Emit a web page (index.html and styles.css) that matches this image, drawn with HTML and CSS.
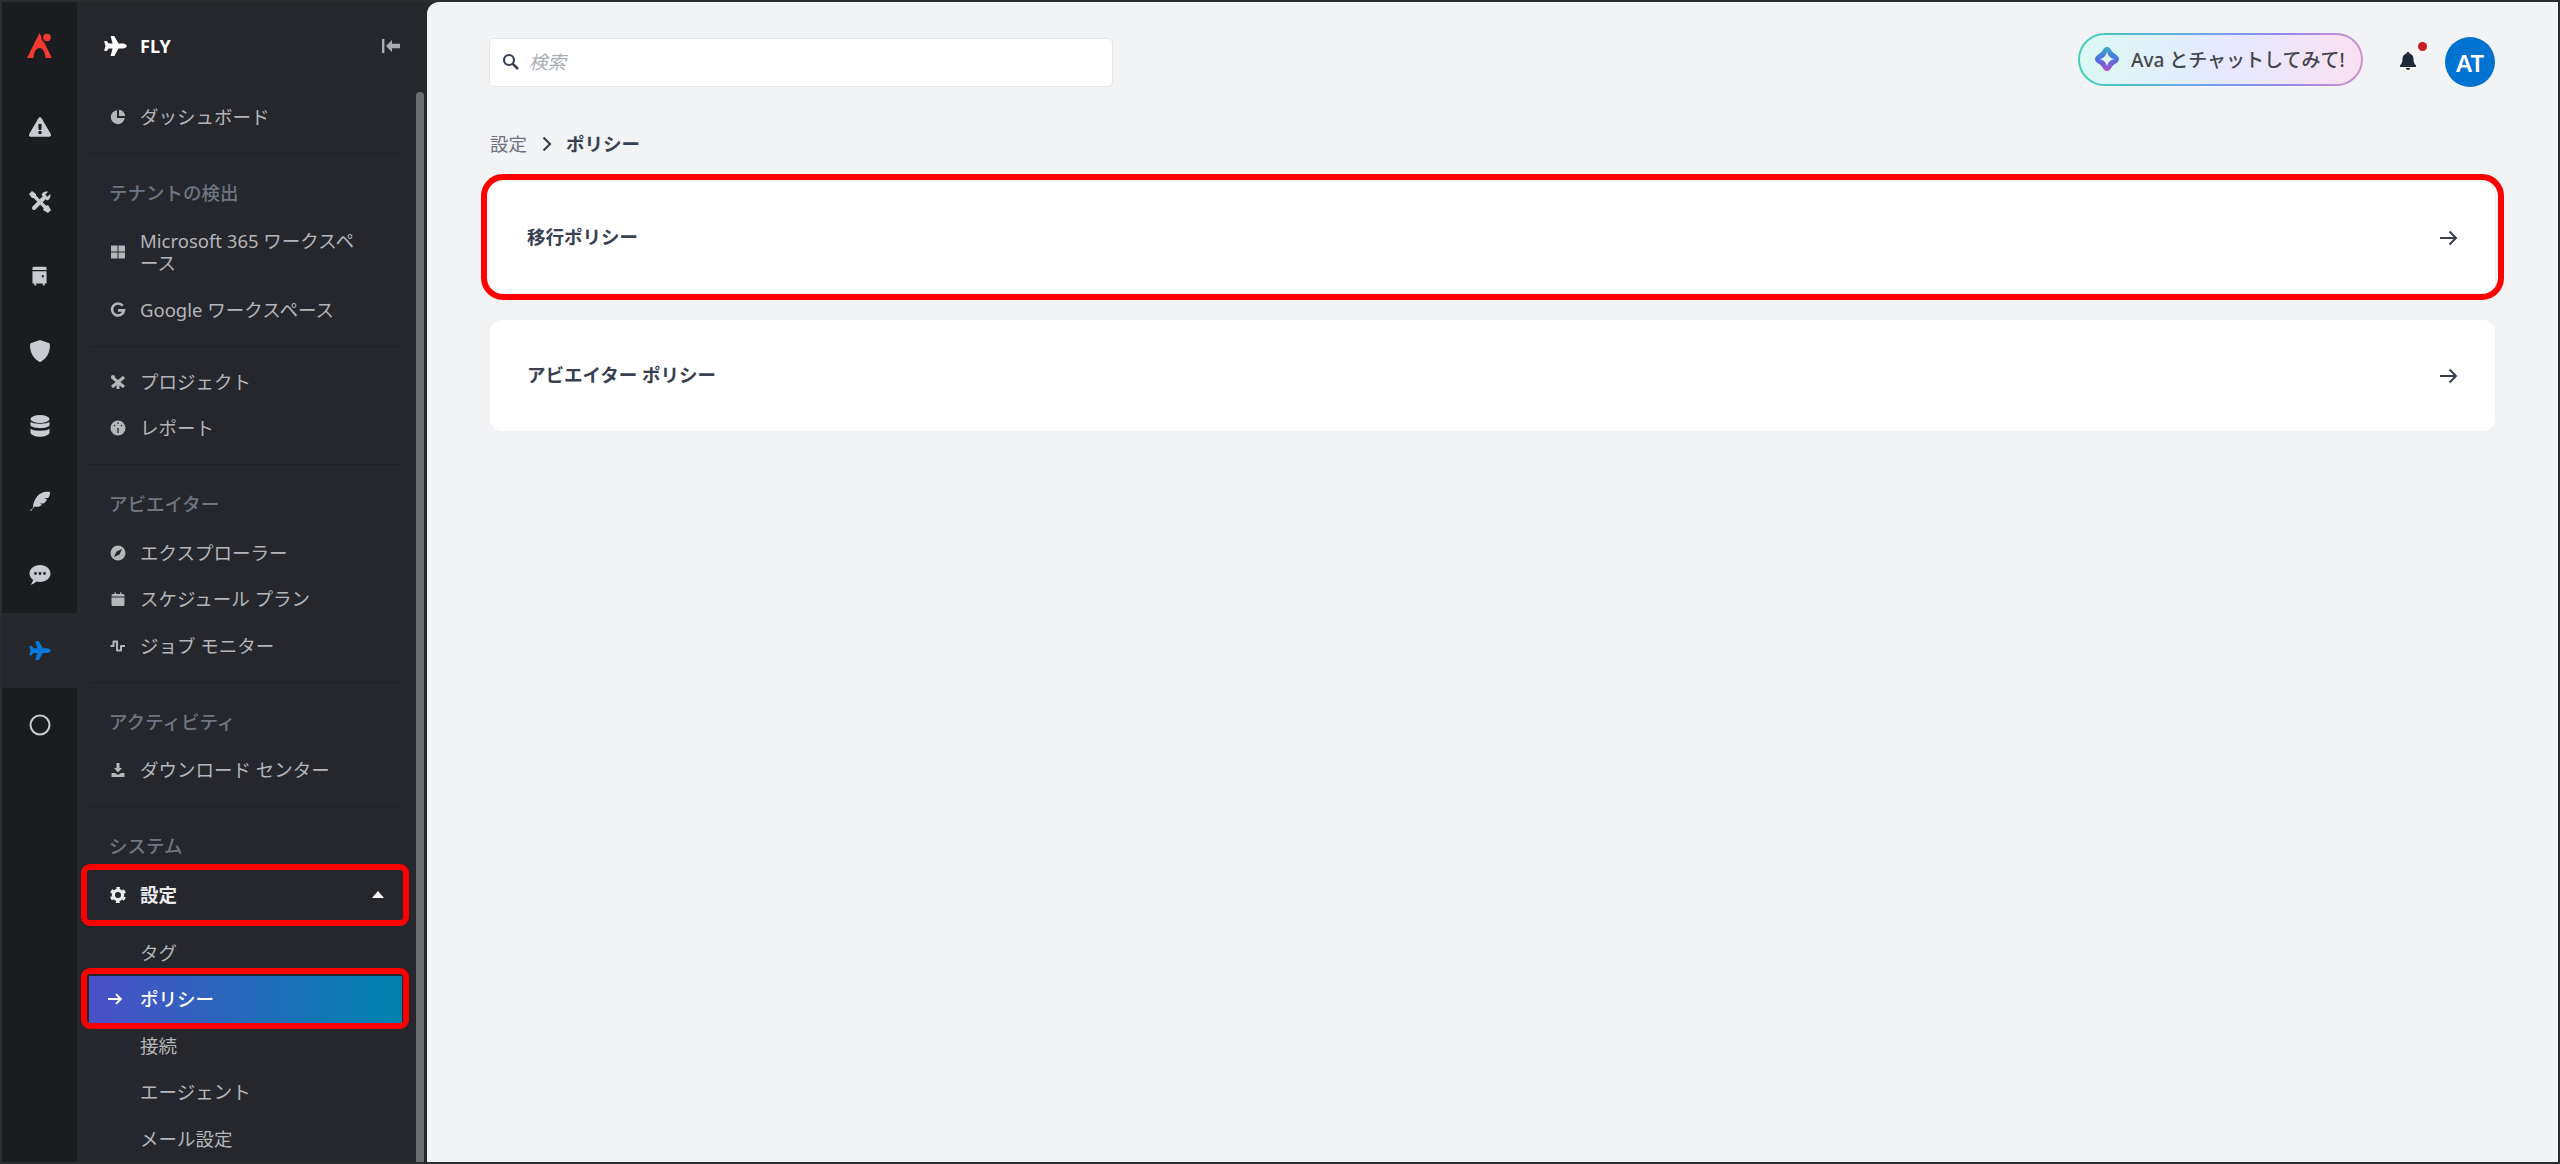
FILE: index.html
```html
<!DOCTYPE html>
<html lang="ja">
<head>
  <meta charset="UTF-8">
  <title>ポリシー - FLY</title>
  <link rel="stylesheet" href="styles.css">
</head>
<body>
  <div class="frame">
    <nav class="rail">
      <div class="rail-logo">
        <svg width="26" height="26" viewBox="0 0 26 26"><path fill="#f03a2e" d="M12.5 0 L25 25 H18.5 C18 19 16 15 12.5 15 C9 15 7 19 6.5 25 H0 Z"/><circle cx="20" cy="4.5" r="5.5" fill="#1b1c20"/><circle cx="20" cy="4.5" r="3.8" fill="#f03a2e"/></svg>
      </div>
      <a class="rail-item"><svg width="22" height="20" viewBox="0 0 576 512"><path fill="currentColor" d="M569.517 440.013C587.975 472.007 564.806 512 527.94 512H48.054c-36.937 0-59.999-40.055-41.577-71.987L246.423 24.035c18.467-32.009 64.72-31.951 83.154 0l239.94 416.978zM288 354c-25.405 0-46 20.595-46 46s20.595 46 46 46 46-20.595 46-46-20.595-46-46-46zm-43.673-165.346l7.418 136c.347 6.364 5.609 11.346 11.982 11.346h48.546c6.373 0 11.635-4.982 11.982-11.346l7.418-136c.375-6.874-5.098-12.654-11.982-12.654h-63.383c-6.884 0-12.356 5.78-11.981 12.654z"/></svg></a>
      <a class="rail-item"><svg width="22" height="22" viewBox="0 0 22 22"><path fill="none" stroke="currentColor" stroke-width="4" stroke-linecap="round" d="M5 17 L16 6"/><path fill="none" stroke="currentColor" stroke-width="3.4" d="M3 3 L18 18"/><path fill="currentColor" d="M0 3 L3 0 L7 3 L7 7 L3 7 Z M15.5 15.5 L19 14 L22 19 L19 22 L14 19 Z M12.5 4 C13.5 1 16.5 0 19 .8 L16 4 L18 6 L21.2 3 C22 5.5 21 8.5 18 9.5 Z"/></svg></a>
      <a class="rail-item"><svg width="15" height="20" viewBox="0 0 16 20"><path fill="currentColor" d="M2 0 H14 A1.5 1.5 0 0 1 15.5 1.5 V3.6 H.5 V1.5 A1.5 1.5 0 0 1 2 0 Z M.5 5 H15.5 V18 H13.5 V20 H11.5 V18 H4.5 V20 H2.5 V18 H.5 Z"/><rect x="10.5" y="9" width="2" height="2.5" fill="#1b1c20"/></svg></a>
      <a class="rail-item"><svg width="20" height="22" viewBox="0 0 20 22"><path fill="currentColor" d="M10 0 L18.6 3 C19.4 3.3 20 4 20 5 C20 12 17 18.5 10.8 21.7 C10.3 22 9.7 22 9.2 21.7 C3 18.5 0 12 0 5 C0 4 .6 3.3 1.4 3 Z"/></svg></a>
      <a class="rail-item"><svg width="20" height="22" viewBox="0 0 20 22"><ellipse cx="10" cy="4" rx="9.5" ry="4" fill="currentColor"/><path fill="currentColor" d="M.5 6.8 C3 9.4 17 9.4 19.5 6.8 V10.5 C17 14 3 14 .5 10.5 Z M.5 13.8 C3 16.4 17 16.4 19.5 13.8 V18 C17 23 3 23 .5 18 Z"/></svg></a>
      <a class="rail-item"><svg width="20" height="20" viewBox="0 0 20 20"><path fill="currentColor" d="M1 20 L0 19.200 L3 17 C3 10 7 3 14 1 C16 .5 18.500 .5 20 1 C20 4 19.500 6 18 7 L14 7.500 L17 8.500 C16 10.500 15 11.500 13.500 12.500 L10 12.500 L12 14 C9 16 6.500 16 4.500 15.500 Z"/></svg></a>
      <a class="rail-item"><svg width="22" height="22" viewBox="0 0 22 22"><path fill="currentColor" d="M11 1 C17 1 21.5 4.7 21.5 9.5 C21.5 14.3 17 18 11 18 C9.8 18 8.6 17.8 7.5 17.5 C6 19 4 20.5 1.5 20.8 C3 19 3.8 17.5 4 15.8 C1.8 14.2 .5 12 .5 9.5 C.5 4.7 5 1 11 1 Z"/><circle cx="6.5" cy="9.5" r="1.4" fill="#1b1c20"/><circle cx="11" cy="9.5" r="1.4" fill="#1b1c20"/><circle cx="15.5" cy="9.5" r="1.4" fill="#1b1c20"/></svg></a>
      <a class="rail-item active"><svg width="22" height="19" viewBox="0 0 576 512"><path fill="currentColor" d="M480 192H365.71L260.61 8.06A16.014 16.014 0 0 0 246.71 0h-65.5c-10.63 0-18.3 10.17-15.38 20.39L214.86 192H112l-43.2-57.6c-3.02-4.03-7.77-6.4-12.8-6.4H16.01C5.6 128-2.04 137.78.49 147.88L32 256 .49 364.12C-2.04 374.22 5.6 384 16.01 384H56c5.04 0 9.78-2.37 12.8-6.4L112 320h102.86l-49.03 171.6c-2.92 10.22 4.75 20.4 15.38 20.4h65.5c5.74 0 11.04-3.08 13.89-8.06L365.71 320H480c35.35 0 96-28.65 96-64s-60.65-64-96-64z"/></svg></a>
      <a class="rail-item"><svg width="22" height="22" viewBox="0 0 22 22"><circle cx="11" cy="11" r="9.5" fill="none" stroke="currentColor" stroke-width="2"/></svg></a>
    </nav>

    <aside class="sidebar">
      <div class="side-head">
        <svg class="side-plane" width="23" height="20" viewBox="0 0 576 512"><path fill="currentColor" d="M480 192H365.71L260.61 8.06A16.014 16.014 0 0 0 246.71 0h-65.5c-10.63 0-18.3 10.17-15.38 20.39L214.86 192H112l-43.2-57.6c-3.02-4.03-7.77-6.4-12.8-6.4H16.01C5.6 128-2.04 137.78.49 147.88L32 256 .49 364.12C-2.04 374.22 5.6 384 16.01 384H56c5.04 0 9.78-2.37 12.8-6.4L112 320h102.86l-49.03 171.6c-2.92 10.22 4.75 20.4 15.38 20.4h65.5c5.74 0 11.04-3.08 13.89-8.06L365.71 320H480c35.35 0 96-28.65 96-64s-60.65-64-96-64z"/></svg>
        <span class="side-title">FLY</span>
        <svg class="side-collapse" width="18" height="14" viewBox="0 0 18 14"><rect x="0" y="0" width="2.4" height="14" fill="currentColor"/><path fill="currentColor" d="M4 7 L10 1 L10 4.8 H18 V9.2 H10 V13 Z"/></svg>
      </div>
      <div class="side-body">
        <div class="side-nav">
          <div class="group">
            <a class="item"><svg class="ico" viewBox="0 0 16 16"><path fill="currentColor" d="M7 1.2a7 7 0 1 0 7.8 7.8H7z"/><path fill="currentColor" d="M9 .8v6.2h6.2A6.6 6.6 0 0 0 9 .8z"/></svg><span>ダッシュボード</span></a>
          </div>
          <div class="group">
            <div class="label">テナントの検出</div>
            <a class="item"><svg class="ico" viewBox="0 0 16 16"><path fill="currentColor" d="M1 1.5h6.5v6H1zM8.5 1.5H15v6H8.5zM1 8.5h6.5v6H1zM8.5 8.5H15v6H8.5z"/></svg><span>Microsoft 365 ワークスペース</span></a>
            <a class="item"><svg class="ico" viewBox="0 0 16 16"><path fill="none" stroke="currentColor" stroke-width="2.6" d="M12.8 3.8A6 6 0 1 0 14 8.4H8"/></svg><span>Google ワークスペース</span></a>
          </div>
          <div class="group">
            <a class="item"><svg class="ico" viewBox="0 0 16 16"><path fill="none" stroke="currentColor" stroke-width="3" d="M2 3 L14 13 M2 13 L14 3 M8 8 L8 15"/><circle cx="3" cy="3" r="2" fill="currentColor"/></svg><span>プロジェクト</span></a>
            <a class="item"><svg class="ico" viewBox="0 0 16 16"><circle cx="8" cy="8" r="7.5" fill="currentColor"/><path fill="none" stroke="#26272c" stroke-width="1.300" d="M8 8 L8 13 M4 5 L5 6 M8 2.500 L8 4 M12 5 L11 6"/></svg><span>レポート</span></a>
          </div>
          <div class="group">
            <div class="label">アビエイター</div>
            <a class="item"><svg class="ico" viewBox="0 0 16 16"><circle cx="8" cy="8" r="7.5" fill="currentColor"/><path fill="#26272c" d="M12 4 L9.5 9.5 L4 12 L6.5 6.5 Z"/></svg><span>エクスプローラー</span></a>
            <a class="item"><svg class="ico" viewBox="0 0 16 16"><path fill="currentColor" d="M1.5 6.5H14.5V13.5A1.5 1.5 0 0 1 13 15H3A1.5 1.5 0 0 1 1.5 13.5ZM3 3H4.5V1.5H6V3H10V1.5H11.5V3H13A1.5 1.5 0 0 1 14.5 4.5V5.5H1.5V4.5A1.5 1.5 0 0 1 3 3Z"/></svg><span>スケジュール プラン</span></a>
            <a class="item"><svg class="ico" viewBox="0 0 16 16"><path fill="none" stroke="currentColor" stroke-width="2" stroke-linejoin="round" d="M.5 8H3.5V3.5H7V12.5H11V8H15"/></svg><span>ジョブ モニター</span></a>
          </div>
          <div class="group">
            <div class="label">アクティビティ</div>
            <a class="item"><svg class="ico" viewBox="0 0 16 16"><path fill="currentColor" d="M6.5 1H9.5V6H12L8 10.5L4 6H6.5ZM1.5 11H5L8 13L11 11H14.500V15H1.500Z"/></svg><span>ダウンロード センター</span></a>
          </div>
          <div class="group">
            <div class="label">システム</div>
            <a class="item item-open marked"><svg class="ico" viewBox="0 0 16 16"><circle cx="8" cy="8" r="4.6" fill="none" stroke="currentColor" stroke-width="3.2"/><circle cx="8" cy="8" r="6.800" fill="none" stroke="currentColor" stroke-width="2.600" stroke-dasharray="3.6 3.520" stroke-dashoffset="1.800" transform="rotate(-90 8 8)"/></svg><span>設定</span><svg class="caret" width="12" height="7" viewBox="0 0 12 7"><path fill="currentColor" d="M6 0 L12 7 H0 Z"/></svg></a>
            <div class="sub">
              <a class="item">タグ</a>
              <a class="item item-active marked-bar"><svg class="arrow-small" width="14" height="12" viewBox="0 0 14 12"><path fill="none" stroke="currentColor" stroke-width="1.900" d="M0 6H12.500M8 1.200L12.800 6L8 10.800"/></svg><span>ポリシー</span></a>
              <a class="item">接続</a>
              <a class="item">エージェント</a>
              <a class="item">メール設定</a>
            </div>
          </div>
        </div>
        <div class="thumb"></div>
      </div>
    </aside>

    <main class="main">
      <header class="topbar">
        <div class="search">
          <svg width="17" height="17" viewBox="0 0 17 17"><circle cx="7" cy="7" r="5" fill="none" stroke="#374151" stroke-width="2.200"/><path stroke="#374151" stroke-width="2.600" d="M10.800 10.800L16 16"/></svg>
          <span class="search-text">検索</span>
        </div>
        <div class="top-right">
          <button class="ava">
            <svg width="26" height="26" viewBox="0 0 24 24"><defs><linearGradient id="avaGrad" x1="0" y1="0" x2="0" y2="1"><stop offset="0" stop-color="#3fa9c9"/><stop offset=".5" stop-color="#4a72e0"/><stop offset="1" stop-color="#b04cc8"/></linearGradient></defs><path fill="url(#avaGrad)" fill-rule="evenodd" d="M12 1 C14 1 15 2.500 16 4 C17 6 19 7 20.500 8 C22.500 9.500 23 10.500 23 12 C23 13.500 22.500 14.500 20.500 16 C19 17 17 18 16 20 C15 21.500 14 23 12 23 C10 23 9 21.500 8 20 C7 18 5 17 3.500 16 C1.500 14.500 1 13.500 1 12 C1 10.500 1.500 9.500 3.500 8 C5 7 7 6 8 4 C9 2.500 10 1 12 1Z M12 5 C12.800 9 15 11.200 19 12 C15 12.800 12.800 15 12 19 C11.200 15 9 12.800 5 12 C9 11.200 11.200 9 12 5Z"/></svg>
            <span>Ava とチャットしてみて!</span>
          </button>
          <div class="bell">
            <svg width="16" height="18" viewBox="0 0 16 18"><path fill="#1f2937" d="M8 0 C9 0 9.500 .6 9.500 1.400 C12 2 13.500 4 13.500 7 C13.500 10.500 14.500 12 16 13.500 V15 H0 V13.500 C1.500 12 2.500 10.500 2.500 7 C2.500 4 4 2 6.500 1.400 C6.500 .6 7 0 8 0 Z M6 16 H10 C10 17.200 9 18 8 18 C7 18 6 17.200 6 16 Z"/></svg>
            <span class="bell-dot"></span>
          </div>
          <div class="avatar">AT</div>
        </div>
      </header>

      <div class="crumbs">
        <span>設定</span>
        <svg width="10" height="16" viewBox="0 0 10 16"><path fill="none" stroke="#374151" stroke-width="2.200" d="M1.500 1.500L8 8L1.500 14.500"/></svg>
        <strong>ポリシー</strong>
      </div>

      <a class="card marked-card">
        <span>移行ポリシー</span>
        <svg width="18" height="16" viewBox="0 0 18 16"><path fill="none" stroke="#374151" stroke-width="2" d="M0 8H16M9.500 1.500L16 8L9.500 14.500"/></svg>
      </a>
      <a class="card">
        <span>アビエイター ポリシー</span>
        <svg width="18" height="16" viewBox="0 0 18 16"><path fill="none" stroke="#374151" stroke-width="2" d="M0 8H16M9.500 1.500L16 8L9.500 14.500"/></svg>
      </a>
    </main>
  </div>
</body>
</html>
```

FILE: styles.css
```css
* {
  box-sizing: border-box;
}

html,
body {
  margin: 0;
  height: 100%;
}

body {
  font-family: "Noto Sans", "Noto Sans CJK JP", sans-serif;
  font-size: 18.5px;
  background: #f2f3f5;
}

.frame {
  display: flex;
  height: 100vh;
  border: 2px solid #2b2c2e;
  overflow: hidden;
  background: #26272c;
}

/* left icon rail */
.rail {
  width: 75px;
  flex: none;
  background: #1b1c20;
  color: #c9cbd0;
}

.rail-logo {
  height: 87.5px;
  display: flex;
  align-items: center;
  justify-content: center;
}

.rail-item {
  height: 74.75px;
  display: flex;
  align-items: center;
  justify-content: center;
}

.rail-item.active {
  background: #26272c;
  color: #0a78d8;
}

/* second column */
.sidebar {
  width: 350px;
  flex: none;
  display: flex;
  flex-direction: column;
  min-height: 0;
}

.side-head {
  height: 90px;
  flex: none;
  display: flex;
  align-items: center;
  padding: 0 27px 2px 27px;
  color: #fff;
}

.side-plane {
  margin-right: 13px;
}

.side-title {
  font-weight: 700;
  font-size: 18px;
  flex: 1;
}

.side-collapse {
  color: #a9acb2;
}

.side-body {
  flex: 1;
  display: flex;
  min-height: 0;
}

.side-nav {
  width: 339px;
  flex: none;
  padding: 1.5px 14px 0 12px;
  overflow: hidden;
}

.thumb {
  width: 8px;
  background: #6c6d72;
  border-radius: 4px 4px 0 0;
}

.group {
  padding: 0 0 12.5px;
  margin-bottom: 12px;
  border-bottom: 1px solid #1f2024;
}

.group:last-child {
  border-bottom: 0;
}

.label {
  height: 52.5px;
  padding: 0 0 0 20px;
  display: flex;
  align-items: center;
  color: #6f7681;
  font-weight: 500;
}

.item {
  position: relative;
  display: flex;
  align-items: center;
  padding: 12.25px 32px 12.25px 21px;
  line-height: 22px;
  color: #b4b6ba;
}

.ico {
  width: 16px;
  height: 16px;
  flex: none;
  margin-right: 14px;
}

.item-open {
  padding-right: 18px;
  color: #e9eaec;
  font-weight: 600;
}

.item-open span {
  flex: 1;
}

.caret {
  color: #fff;
}

.sub {
  margin-top: 11.5px;
}

.sub .item {
  padding-left: 51px;
}

.sub .item.item-active {
  padding-left: 19px;
  color: #fff;
  font-weight: 500;
  background: linear-gradient(90deg, #4b4fc6, #0083ae);
}

.arrow-small {
  margin-right: 18px;
  flex: none;
}

/* main area */
.main {
  flex: 1;
  min-width: 0;
  background: #f2f3f5;
  border-top-left-radius: 12px;
  padding: 35px 63px 0;
}

.topbar {
  display: flex;
  justify-content: space-between;
  align-items: center;
  height: 50px;
}

.search {
  width: 624px;
  height: 49px;
  margin-left: -1px;
  display: flex;
  align-items: center;
  padding: 0 0 2px 12px;
  background: #fff;
  border: 1px solid #e5e7eb;
  border-radius: 5px;
}

.search-text {
  margin-left: 10px;
  font-style: italic;
  color: #a8adb5;
}

.top-right {
  display: flex;
  align-items: center;
}

.ava {
  width: 285px;
  height: 53px;
  margin-bottom: 6px;
  display: flex;
  align-items: center;
  padding: 0 0 0 14px;
  font: inherit;
  font-size: 19px;
  font-weight: 500;
  color: #44464c;
  border: 2px solid transparent;
  border-radius: 27px;
  background:
    linear-gradient(90deg, #dcf9f3, #e5e9ff 50%, #f8e1f1) padding-box,
    linear-gradient(90deg, #3fd2b6, #6aa6e8 40%, #8f88ea 70%, #d08fce) border-box;
}

.ava span {
  margin-left: 11px;
  white-space: nowrap;
}

.bell {
  position: relative;
  display: flex;
  margin: 0 0 2px 37px;
}

.bell-dot {
  position: absolute;
  top: -10px;
  left: 18px;
  width: 9px;
  height: 9px;
  border-radius: 50%;
  background: #c81e1e;
}

.avatar {
  width: 50px;
  height: 50px;
  margin-left: 29px;
  display: flex;
  align-items: center;
  justify-content: center;
  border-radius: 50%;
  background: #0073d1;
  color: #fff;
  font-size: 24px;
  font-weight: 600;
}

.crumbs {
  display: flex;
  align-items: center;
  height: 24px;
  margin: 45px 0 26px;
  color: #6b7280;
}

.crumbs span,
.crumbs strong {
  margin-bottom: 2px;
}

.crumbs svg {
  margin: 0 14px 0 15px;
}

.crumbs strong {
  color: #374151;
  font-weight: 700;
}

.card {
  position: relative;
  display: flex;
  justify-content: space-between;
  align-items: center;
  height: 111px;
  margin-bottom: 27px;
  padding: 0 37px;
  background: #fff;
  border-radius: 12px;
  color: #374151;
  font-weight: 700;
}

.card span {
  margin-bottom: 3px;
}

/* red annotation boxes drawn over the screenshot */
.marked::after,
.marked-bar::after,
.marked-card::after {
  content: "";
  position: absolute;
  border: 6px solid #f00;
  border-radius: 9px;
}

.marked::after {
  inset: -8px -7px -8px -8px;
}

.marked-bar::after {
  inset: -8px -7px -6px -8px;
}

.marked-card::after {
  inset: -8px -9px -7px -9px;
  border-radius: 22px;
}
```
